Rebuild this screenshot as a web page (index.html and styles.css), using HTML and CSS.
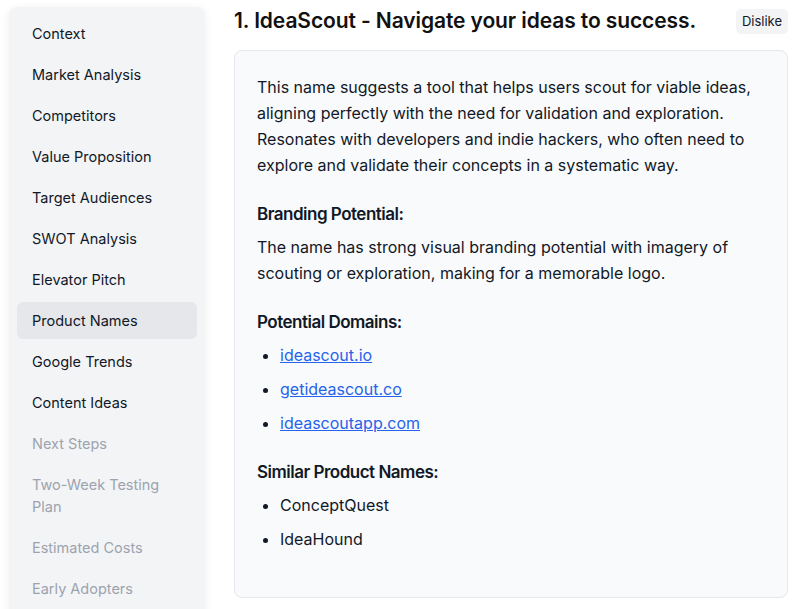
FILE: index.html
```html
<!DOCTYPE html>
<html lang="en">
<head>
<meta charset="utf-8">
<title>IdeaScout - Product Names</title>
<link rel="stylesheet" href="styles.css">
</head>
<body>
<div class="layout">
  <nav class="sidebar">
    <a class="nav-item">Context</a>
    <a class="nav-item">Market Analysis</a>
    <a class="nav-item">Competitors</a>
    <a class="nav-item">Value Proposition</a>
    <a class="nav-item">Target Audiences</a>
    <a class="nav-item">SWOT Analysis</a>
    <a class="nav-item">Elevator Pitch</a>
    <a class="nav-item active">Product Names</a>
    <a class="nav-item">Google Trends</a>
    <a class="nav-item">Content Ideas</a>
    <a class="nav-item disabled">Next Steps</a>
    <a class="nav-item disabled">Two-Week Testing Plan</a>
    <a class="nav-item disabled">Estimated Costs</a>
    <a class="nav-item disabled">Early Adopters</a>
  </nav>
  <main class="main">
    <div class="header">
      <h1 class="title">1. IdeaScout - Navigate your ideas to success.</h1>
      <button class="dislike">Dislike</button>
    </div>
    <section class="card">
      <p class="text">This name suggests a tool that helps users scout for viable ideas, aligning perfectly with the need for validation and exploration. Resonates with developers and indie hackers, who often need to explore and validate their concepts in a systematic way.</p>
      <h3 class="subhead">Branding Potential:</h3>
      <p class="text">The name has strong visual branding potential with imagery of scouting or exploration, making for a memorable logo.</p>
      <h3 class="subhead">Potential Domains:</h3>
      <ul class="list">
        <li><a class="link" href="#">ideascout.io</a></li>
        <li><a class="link" href="#">getideascout.co</a></li>
        <li><a class="link" href="#">ideascoutapp.com</a></li>
      </ul>
      <h3 class="subhead">Similar Product Names:</h3>
      <ul class="list">
        <li>ConceptQuest</li>
        <li>IdeaHound</li>
      </ul>
    </section>
  </main>
</div>
</body>
</html>
```

FILE: styles.css
```css
* { box-sizing: border-box; }
html, body { margin: 0; padding: 0; background: #ffffff; }
body {
  font-family: Inter, "Noto Sans", "Liberation Sans", sans-serif;
  color: #111827;
  overflow: hidden;
}
.layout {
  display: flex;
  align-items: flex-start;
  gap: 29px;
  padding: 7px 12px 0 9px;
}
.sidebar {
  flex: 0 0 196px;
  display: flex;
  flex-direction: column;
  gap: 4px;
  padding: 8px 8px 40px;
  min-height: 660px;
  background: #f3f4f6;
  border-radius: 8px;
  box-shadow: 0 2px 10px rgba(0, 0, 0, 0.07);
}
.nav-item {
  display: block;
  padding: 7.5px 15px;
  font-size: 14.5px;
  line-height: 22px;
  color: #111827;
  border-radius: 6px;
}
.nav-item.active { background: #e5e7eb; }
.nav-item.disabled { color: #9ca3af; }
.main {
  flex: 1;
  min-width: 0;
}
.header {
  display: flex;
  align-items: center;
  justify-content: space-between;
  height: 28px;
  margin-bottom: 15px;
}
.title {
  margin: 0;
  font-size: 21px;
  line-height: 28px;
  font-weight: 600;
  color: #111111;
  letter-spacing: -0.1px;
}
.dislike {
  font-family: inherit;
  font-size: 13px;
  line-height: 17px;
  padding: 4px 6px;
  border: none;
  border-radius: 5px;
  background: #f3f4f6;
  color: #111827;
}
.card {
  background: #f9fafb;
  border: 1px solid #e5e7eb;
  border-radius: 8px;
  padding: 23px 22px 45px;
}
.text {
  margin: 0;
  font-size: 16px;
  line-height: 26px;
}
.subhead {
  margin: 22px 0 6px;
  font-size: 17px;
  line-height: 28px;
  font-weight: 600;
  letter-spacing: -0.5px;
}
.list {
  margin: 0;
  padding-left: 23px;
  font-size: 16px;
  line-height: 26px;
}
.list li { margin-bottom: 8px; }
.list li:last-child { margin-bottom: 0; }
.link { color: #2563eb; text-decoration: underline; }
```
